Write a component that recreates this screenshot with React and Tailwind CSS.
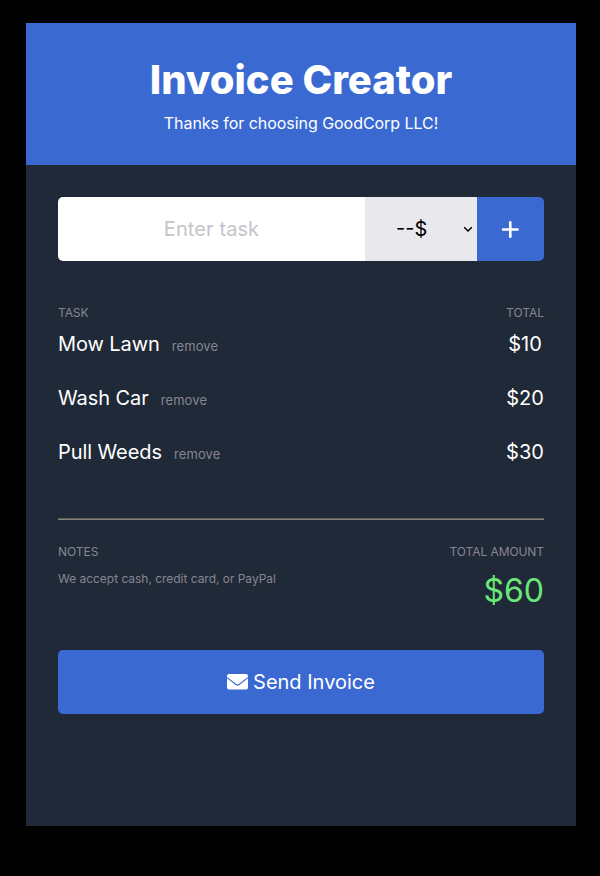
const tasks = [
  { name: "Mow Lawn", price: 10 },
  { name: "Wash Car", price: 20 },
  { name: "Pull Weeds", price: 30 },
];

function EnvelopeIcon() {
  return (
    <svg width="21" height="16" viewBox="0 0 21 16" fill="currentColor">
      <path d="M2 0h17a2 2 0 0 1 2 2v.9l-9.3 7.2a1.9 1.9 0 0 1-2.4 0L0 2.9V2a2 2 0 0 1 2-2Z" />
      <path d="m0 4.2 8.6 6.7a3 3 0 0 0 3.8 0L21 4.2v9.3a2 2 0 0 1-2 2H2a2 2 0 0 1-2-2Z" />
    </svg>
  );
}

export default function App() {
  return (
    <div className="h-[876px] w-[600px] bg-black pt-[23px] pl-[26px] font-['Inter',sans-serif]">
      <main className="h-[803px] w-[550px] bg-[#1f2937]">
        <header className="flex h-[142px] flex-col items-center bg-[#3b69d2] pt-[33px] text-white">
          <h1 className="text-[40px] leading-[48px] font-extrabold">Invoice Creator</h1>
          <p className="mt-[7px] text-[16px] leading-[24px] tracking-[-0.05px]">Thanks for choosing GoodCorp LLC!</p>
        </header>
        <div className="px-[32px] pt-[32px]">
          <form className="flex h-[64px] w-[486px] overflow-hidden rounded-[5px]">
            <input
              placeholder="Enter task"
              className="w-[307px] bg-white text-center text-[20px] tracking-[0.1px] text-black placeholder:text-[#c4c4ca]"
            />
            <button type="button" className="flex w-[112px] items-center justify-between bg-[#e9e9ed] pr-[4px] pl-[31px] text-[20px] text-black">
              <span>--$</span>
              <svg width="10" height="10" viewBox="0 0 10 10" fill="none" stroke="currentColor" strokeWidth="1.5">
                <path d="M1.2 3.2 5 7l3.8-3.8" />
              </svg>
            </button>
            <button type="button" aria-label="Add" className="flex w-[67px] items-center justify-center bg-[#3b69d2] pr-[1px] text-white">
              <svg width="18" height="18" viewBox="0 0 18 18" fill="none" stroke="currentColor" strokeWidth="2.6" strokeLinecap="round">
                <path d="M9.3 2.2v14.6M2 9.5h14.6" />
              </svg>
            </button>
          </form>
          <div className="mt-[44px] flex justify-between text-[12px] leading-[16px] text-[#888693]">
            <span className="tracking-[-0.1px]">TASK</span>
            <span>TOTAL</span>
          </div>
          <ul className="mt-[8px]">
            {tasks.map((t) => (
              <li key={t.name} className="flex h-[54px] items-start justify-between text-[20px] leading-[30px] text-white">
                <div className="flex items-baseline gap-[12px]">
                  <span className="tracking-[-0.08px]">{t.name}</span>
                  <button type="button" className="text-[13px] tracking-[0.1px] text-[#888693]">remove</button>
                </div>
                <span className="w-[38px] text-center">${t.price}</span>
              </li>
            ))}
          </ul>
          <hr className="mt-[27px] h-[2px] border-t border-b border-t-[#605f61] border-b-[#858379]" />
          <section className="mt-[24px] flex justify-between text-[12px] leading-[16px] text-[#888693]">
            <div>
              <h2>NOTES</h2>
              <p className="mt-[11px] tracking-[-0.03px]">We accept cash, credit card, or PayPal</p>
            </div>
            <div className="text-right">
              <h2 className="tracking-[-0.08px]">TOTAL AMOUNT</h2>
              <p className="mt-[11px] text-[32px] leading-[40px] text-[#6ae877]">$60</p>
            </div>
          </section>
          <button type="button" className="mt-[39px] flex h-[64px] w-full items-center justify-center gap-[5px] rounded-[5px] bg-[#3b69d2] text-[20px] text-white">
            <EnvelopeIcon />
            <span>Send Invoice</span>
          </button>
        </div>
      </main>
    </div>
  );
}
